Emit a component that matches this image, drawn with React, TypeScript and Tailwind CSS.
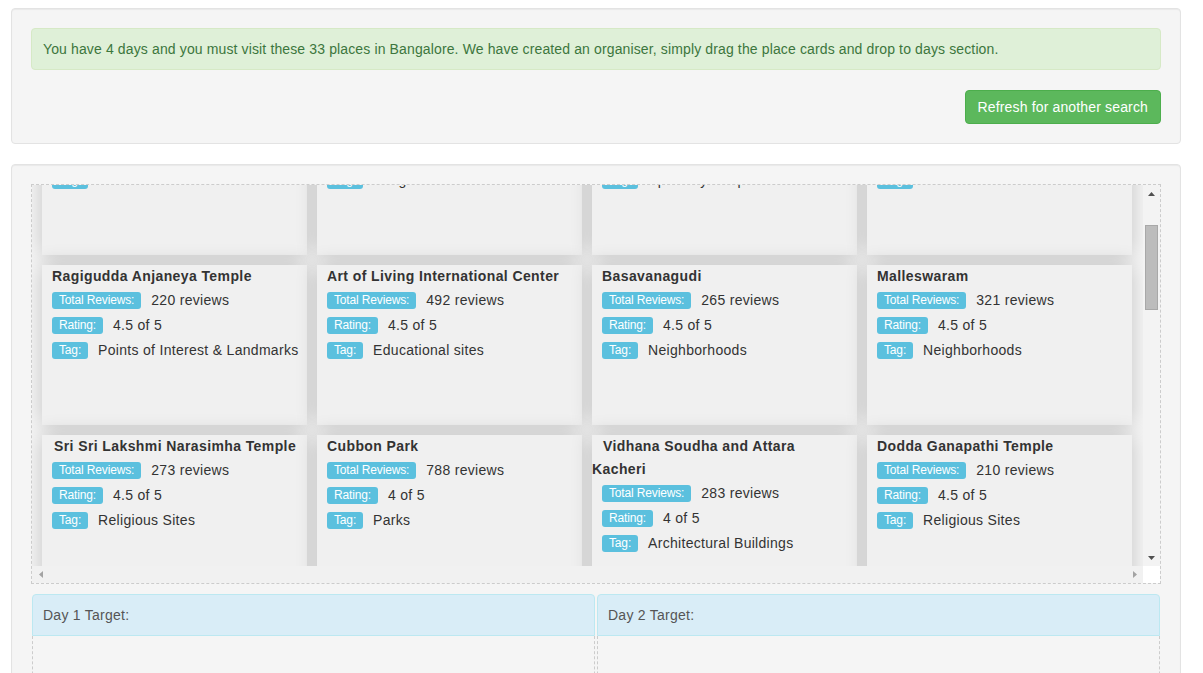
import { useLayoutEffect, useRef } from 'react';

type Place = {
  name: string;
  reviews: number;
  rating: string;
  tag: string;
  indent?: string;
};

const places: Place[] = [
  { name: 'Lalbagh Botanical Garden', reviews: 1514, rating: '4.5', tag: 'Gardens' },
  { name: 'ISKCON Temple', reviews: 1120, rating: '4.5', tag: 'Religious Sites' },
  { name: 'Commercial Street', reviews: 402, rating: '4', tag: 'Specialty Shops' },
  { name: 'Bangalore Palace', reviews: 1336, rating: '4', tag: 'Castles' },
  { name: 'Ragigudda Anjaneya Temple', reviews: 220, rating: '4.5', tag: 'Points of Interest & Landmarks' },
  { name: 'Art of Living International Center', reviews: 492, rating: '4.5', tag: 'Educational sites' },
  { name: 'Basavanagudi', reviews: 265, rating: '4.5', tag: 'Neighborhoods' },
  { name: 'Malleswaram', reviews: 321, rating: '4.5', tag: 'Neighborhoods' },
  { name: 'Sri Sri Lakshmi Narasimha Temple', reviews: 273, rating: '4.5', tag: 'Religious Sites', indent: 'indent-[12px]' },
  { name: 'Cubbon Park', reviews: 788, rating: '4', tag: 'Parks' },
  { name: 'Vidhana Soudha and Attara Kacheri', reviews: 283, rating: '4', tag: 'Architectural Buildings', indent: 'indent-[11px]' },
  { name: 'Dodda Ganapathi Temple', reviews: 210, rating: '4.5', tag: 'Religious Sites' },
  { name: 'Bull Temple', reviews: 512, rating: '4.5', tag: 'Religious Sites' },
  { name: "Tipu Sultan's Summer Palace", reviews: 690, rating: '4', tag: 'Historic Sites' },
  { name: 'Visvesvaraya Museum', reviews: 344, rating: '4.5', tag: 'Science Museums' },
  { name: 'UB City', reviews: 601, rating: '4', tag: 'Shopping Malls' },
  { name: 'Bannerghatta National Park', reviews: 955, rating: '4', tag: 'National Parks' },
  { name: 'Ulsoor Lake', reviews: 188, rating: '3.5', tag: 'Bodies of Water' },
  { name: 'St. Mary’s Basilica', reviews: 142, rating: '4.5', tag: 'Churches & Cathedrals' },
  { name: 'Nandi Hills', reviews: 1203, rating: '4', tag: 'Mountains' },
  { name: 'Wonderla Amusement Park', reviews: 874, rating: '4.5', tag: 'Amusement Parks' },
  { name: 'Innovative Film City', reviews: 301, rating: '3.5', tag: 'Theme Parks' },
  { name: 'Jawaharlal Nehru Planetarium', reviews: 166, rating: '4', tag: 'Observatories' },
  { name: 'Venkatappa Art Gallery', reviews: 98, rating: '4', tag: 'Art Galleries' },
  { name: 'National Gallery of Modern Art', reviews: 233, rating: '4.5', tag: 'Art Museums' },
  { name: 'Gavi Gangadhareshwara Temple', reviews: 175, rating: '4.5', tag: 'Religious Sites' },
  { name: 'Sankey Tank', reviews: 121, rating: '4', tag: 'Bodies of Water' },
  { name: 'HAL Aerospace Museum', reviews: 388, rating: '4.5', tag: 'Military Museums' },
  { name: 'Chinnaswamy Stadium', reviews: 210, rating: '4.5', tag: 'Arenas & Stadiums' },
  { name: 'Lumbini Gardens', reviews: 137, rating: '3.5', tag: 'Gardens' },
  { name: 'Hebbal Lake', reviews: 64, rating: '4', tag: 'Bodies of Water' },
  { name: 'Government Museum', reviews: 109, rating: '3.5', tag: 'History Museums' },
  { name: 'Freedom Park', reviews: 57, rating: '4', tag: 'Parks' },
];

// the list is scrolled down this far, the scrollbar thumb follows it
const SCROLL_TOP = 100;
const VIEW_H = 381;
const CONTENT_H = 1540;
const TRACK_H = VIEW_H - 34;

function Label({ children }: { children: string }) {
  return (
    <span className="inline-block h-[17px] shrink-0 rounded-[3px] bg-[#5bc0de] px-[7px] text-[12px] leading-[17px] tracking-[-0.15px] text-white">
      {children}
    </span>
  );
}

function Row({ label, value }: { label: string; value: string }) {
  return (
    <div className="flex h-[25px] items-center whitespace-nowrap pl-[10px]">
      <Label>{label}</Label>
      <span className="ml-[10px] text-[14px] tracking-[0.3px] text-[#333]">{value}</span>
    </div>
  );
}

function PlaceCard({ place }: { place: Place }) {
  return (
    <div className="h-[160px] overflow-hidden bg-[#f0f0f0] shadow-[0_0_20px_rgba(0,0,0,0.2)]">
      <div className={`pr-[8px] text-[14px] font-bold leading-[23px] tracking-[0.4px] text-[#333] ${place.indent ?? 'indent-[10px]'}`}>
        {place.name}
      </div>
      <Row label="Total Reviews:" value={`${place.reviews} reviews`} />
      <Row label="Rating:" value={`${place.rating} of 5`} />
      <Row label="Tag:" value={place.tag} />
    </div>
  );
}

function Arrow({ dir, color }: { dir: 'up' | 'down' | 'left' | 'right'; color: string }) {
  const vertical = dir === 'up' || dir === 'down';
  const points = {
    up: '0,4 3.5,0 7,4',
    down: '0,0 7,0 3.5,4',
    left: '4,0 4,7 0,3.5',
    right: '0,0 4,3.5 0,7',
  }[dir];
  return (
    <div className="flex h-[17px] w-[17px] shrink-0 items-center justify-center">
      <svg width={vertical ? 7 : 4} height={vertical ? 4 : 7} viewBox={vertical ? '0 0 7 4' : '0 0 4 7'}>
        <polygon points={points} fill={color} />
      </svg>
    </div>
  );
}

function VScrollbar() {
  const thumbTop = (SCROLL_TOP / CONTENT_H) * TRACK_H;
  const thumbH = (VIEW_H / CONTENT_H) * TRACK_H;
  return (
    <div className="flex w-[17px] shrink-0 flex-col bg-[#f3f3f3]">
      <Arrow dir="up" color="#505050" />
      <div className="flex-1">
        <div
          className="ml-[2px] w-[13px] border border-[#a8a8a8] bg-[#bcbcbc]"
          style={{ marginTop: thumbTop, height: thumbH }}
        />
      </div>
      <Arrow dir="down" color="#505050" />
    </div>
  );
}

function HScrollbar() {
  return (
    <div className="flex h-[17px] flex-1 bg-[#f1f1f1]">
      <Arrow dir="left" color="#a3a3a3" />
      <div className="flex-1" />
      <Arrow dir="right" color="#a3a3a3" />
    </div>
  );
}

function DayTarget({ day }: { day: number }) {
  return (
    <div>
      <div className="rounded-t-[4px] border border-[#bce8f1] bg-[#d9edf7] p-[10px] text-[14px] leading-[20px] tracking-[0.25px] text-[#555]">
        Day {day} Target:
      </div>
      <div className="min-h-[150px] border border-t-0 border-dashed border-[#ccc]" />
    </div>
  );
}

export default function App() {
  const scrollRef = useRef<HTMLDivElement>(null);

  useLayoutEffect(() => {
    if (scrollRef.current) scrollRef.current.scrollTop = SCROLL_TOP;
  }, []);

  return (
    <div className="min-h-screen bg-white pt-2 font-['Liberation_Sans',Arial,sans-serif] text-[14px] text-[#333]">
      <div className="ml-[11px] w-[1170px]">
        <div className="mb-[20px] rounded-[4px] border border-[#e3e3e3] bg-[#f5f5f5] p-[19px] shadow-[inset_0_1px_1px_rgba(0,0,0,0.05)]">
          <div className="mb-[20px] rounded-[4px] border border-[#d6e9c6] bg-[#dff0d8] px-[11px] py-[10px] leading-[20px] tracking-[0.13px] text-[#3c763d]">
            You have 4 days and you must visit these 33 places in Bangalore. We have created an organiser, simply drag the place cards and drop to days section.
          </div>
          <div className="flex justify-end">
            <button className="rounded-[4px] border border-[#4cae4c] bg-[#5cb85c] px-[12px] py-[6px] text-[14px] leading-[20px] tracking-[0.15px] text-white">
              Refresh for another search
            </button>
          </div>
        </div>

        <div className="rounded-[4px] border border-[#e3e3e3] bg-[#f5f5f5] p-[19px] shadow-[inset_0_1px_1px_rgba(0,0,0,0.05)]">
          <div className="border border-dashed border-[#ccc]">
            <div className="flex">
              <div ref={scrollRef} className="h-[381px] flex-1 overflow-hidden">
                <div className="grid grid-cols-[repeat(4,265px)] gap-[10px] p-[10px]">
                  {places.map((p) => (
                    <PlaceCard key={p.name} place={p} />
                  ))}
                </div>
              </div>
              <VScrollbar />
            </div>
            <div className="flex">
              <HScrollbar />
              <div className="h-[17px] w-[17px] bg-white" />
            </div>
          </div>

          <div className="mx-px mt-[10px] grid grid-cols-2 gap-x-[2px] gap-y-[20px]">
            {[1, 2, 3, 4].map((d) => (
              <DayTarget key={d} day={d} />
            ))}
          </div>
        </div>
      </div>
    </div>
  );
}
